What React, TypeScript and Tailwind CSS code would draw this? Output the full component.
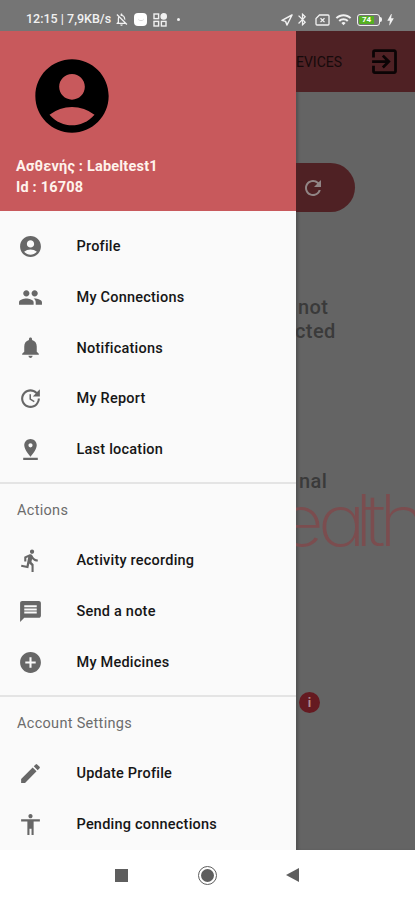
import type { IconType } from 'react-icons';
import {
  MdAccessibility,
  MdAccountCircle,
  MdAddCircle,
  MdBluetooth,
  MdBolt,
  MdCreate,
  MdDirectionsRun,
  MdExitToApp,
  MdMessage,
  MdNotifications,
  MdOutlineNotificationsOff,
  MdPeople,
  MdPinDrop,
  MdRefresh,
  MdUpdate,
  MdWifi,
} from 'react-icons/md';

interface MenuItem {
  label: string;
  icon: IconType;
}

const mainItems: MenuItem[] = [
  { label: 'Profile', icon: MdAccountCircle },
  { label: 'My Connections', icon: MdPeople },
  { label: 'Notifications', icon: MdNotifications },
  { label: 'My Report', icon: MdUpdate },
  { label: 'Last location', icon: MdPinDrop },
];

const actionItems: MenuItem[] = [
  { label: 'Activity recording', icon: MdDirectionsRun },
  { label: 'Send a note', icon: MdMessage },
  { label: 'My Medicines', icon: MdAddCircle },
];

const accountItems: MenuItem[] = [
  { label: 'Update Profile', icon: MdCreate },
  { label: 'Pending connections', icon: MdAccessibility },
];

function StatusBar() {
  return (
    <div className="flex h-[31px] shrink-0 items-center bg-[#757575] pt-[8px] pr-[17px] pl-[26px] text-[#f1f1f1]">
      <span className="w-[86px] text-[12.5px] font-medium whitespace-nowrap">12:15 | 7,9KB/s</span>
      <MdOutlineNotificationsOff className="ml-[2px] size-[15px]" />
      <span className="ml-[5px] flex size-[13px] items-center justify-center rounded-[4px] bg-white">
        <span className="h-[3px] w-[6px] rounded-b-full border-b border-[#d4d4d4]" />
      </span>
      <svg className="ml-[6px] size-[14px]" viewBox="0 0 14 14" fill="none" stroke="currentColor" strokeWidth="1.4">
        <rect x="1" y="1" width="4.6" height="4.6" />
        <circle cx="10.7" cy="3.4" r="2.6" fill="currentColor" />
        <rect x="1" y="8.4" width="4.6" height="4.6" />
        <rect x="8.4" y="8.4" width="4.6" height="4.6" />
      </svg>
      <span className="ml-[10px] size-[2.5px] rounded-full bg-current" />

      <div className="ml-auto flex items-center">
        <svg className="size-[12px]" viewBox="0 0 12 12" fill="none" stroke="currentColor" strokeWidth="1.5" strokeLinejoin="round">
          <path d="M11 1L1 6.4l3.6 1L6 11z" />
        </svg>
        <MdBluetooth className="ml-[2px] size-[15px]" />
        <svg className="ml-[5px] h-[12px] w-[15px]" viewBox="0 0 15 12" fill="none" stroke="currentColor" strokeWidth="1.3">
          <path d="M4.5 1H13q1 0 1 1v8q0 1-1 1H2q-1 0-1-1V4.5z" />
          <path d="M5.5 4.3l4 3.8M9.5 4.3l-4 3.8" />
        </svg>
        <MdWifi className="ml-[5px] size-[17px]" />
        <div className="ml-[5px] flex items-center">
          <div className="flex h-[12px] w-[23px] items-center rounded-[3px] border-[1.5px] border-current p-[1px]">
            <div className="flex h-full w-[15px] items-center justify-center bg-[#55b022] text-[8px] font-bold text-white">
              74
            </div>
          </div>
          <div className="h-[5px] w-[2px] rounded-r-sm bg-current" />
        </div>
        <MdBolt className="ml-[1px] size-[15px]" />
      </div>
    </div>
  );
}

function MenuList({ items }: { items: MenuItem[] }) {
  return (
    <ul>
      {items.map(({ label, icon: Icon }) => (
        <li key={label} className="flex h-[50.75px] items-center pl-[17.5px]">
          <Icon className="size-[25px] text-[#676767]" />
          <span className="ml-[34px] pt-[1px] text-[14.5px] font-medium tracking-[0.22px] text-[#161616]">{label}</span>
        </li>
      ))}
    </ul>
  );
}

function MenuSection({ title, items }: { title: string; items: MenuItem[] }) {
  return (
    <section className="mt-[7.5px] border-t-2 border-[#e4e4e4]">
      <h2 className="flex h-[51px] items-center pt-[2px] pl-[17px] text-[14.5px] tracking-[0.3px] text-[#6c6c6c]">
        {title}
      </h2>
      <MenuList items={items} />
    </section>
  );
}

function Drawer() {
  return (
    <aside className="w-[296px] shrink-0 overflow-hidden bg-[#fafafa]">
      <div className="h-[180px] bg-[#c8595c] pt-[21px] pl-[16px]">
        <MdAccountCircle className="ml-[12px] size-[88px] text-black" />
        <p className="mt-[17px] text-[14.5px] leading-[20.5px] font-bold tracking-[0.2px] text-[#fff3ec]">
          Ασθενής : Labeltest1
          <br />
          Id : 16708
        </p>
      </div>
      <nav className="pt-[10px]">
        <MenuList items={mainItems} />
        <MenuSection title="Actions" items={actionItems} />
        <MenuSection title="Account Settings" items={accountItems} />
      </nav>
    </aside>
  );
}

function DimmedPage() {
  return (
    <main className="min-w-0 flex-1 overflow-hidden bg-[#646464] shadow-[inset_3px_0_3px_-1px_#505050]">
      <div className="flex h-[61px] items-center justify-between bg-[#4f2124] pr-[14px]">
        <span className="pt-[1px] text-[14px] text-[#160a0b]">EVICES</span>
        <MdExitToApp className="size-[33px] text-[#0b0405]" />
      </div>
      <div className="mt-[71px] flex h-[49px] w-[59px] items-center rounded-r-full bg-[#4f2124] pl-[5px]">
        <MdRefresh className="size-[24px] text-[#918585]" />
      </div>
      <div className="mt-[83px] h-[48px] text-[20px] leading-[24px] font-medium tracking-[0.4px] text-[#3a3a3a]">
        <p className="pl-[2px]">not</p>
        <p className="-ml-[1px]">cted</p>
      </div>
      <p className="mt-[126px] pl-[3px] text-[20px] leading-[24px] font-medium tracking-[0.4px] text-[#3a3a3a]">nal</p>
      {/* Brand wordmark, runs off both edges */}
      <p className="-ml-[19px] h-[60px] origin-left scale-x-115 font-[Inter] text-[71px] leading-[55px] font-extralight tracking-[-5.5px] whitespace-nowrap text-[#7b4d4f] [font-feature-settings:'cv11']">
        e<span className="tracking-[-10px]">a</span>
        <span className="tracking-[-8px]">l</span>
        <span className="tracking-[-6px]">t</span>h
      </p>
      <div className="mt-[139px] ml-[3px] flex size-[21px] items-center justify-center rounded-full bg-[#651a21] text-[13px] font-bold text-[#b08c8e]">
        i
      </div>
    </main>
  );
}

function NavigationBar() {
  return (
    <div className="flex h-[50px] shrink-0 items-center bg-white pl-[115px] text-[#5e5e5e]">
      <span className="size-[13px] bg-current" />
      <span className="ml-[70px] flex size-[19px] items-center justify-center rounded-full border-[1.5px] border-current">
        <span className="size-[13px] rounded-full bg-current" />
      </span>
      <svg className="ml-[69px] h-[14px] w-[13px]" viewBox="0 0 13 14" fill="currentColor">
        <path d="M0 7L13 0v14z" />
      </svg>
    </div>
  );
}

export default function App() {
  return (
    <div className="flex h-[900px] w-[415px] flex-col overflow-hidden font-[Roboto,sans-serif]">
      <StatusBar />
      <div className="flex h-[819px] shrink-0">
        <Drawer />
        <DimmedPage />
      </div>
      <NavigationBar />
    </div>
  );
}
